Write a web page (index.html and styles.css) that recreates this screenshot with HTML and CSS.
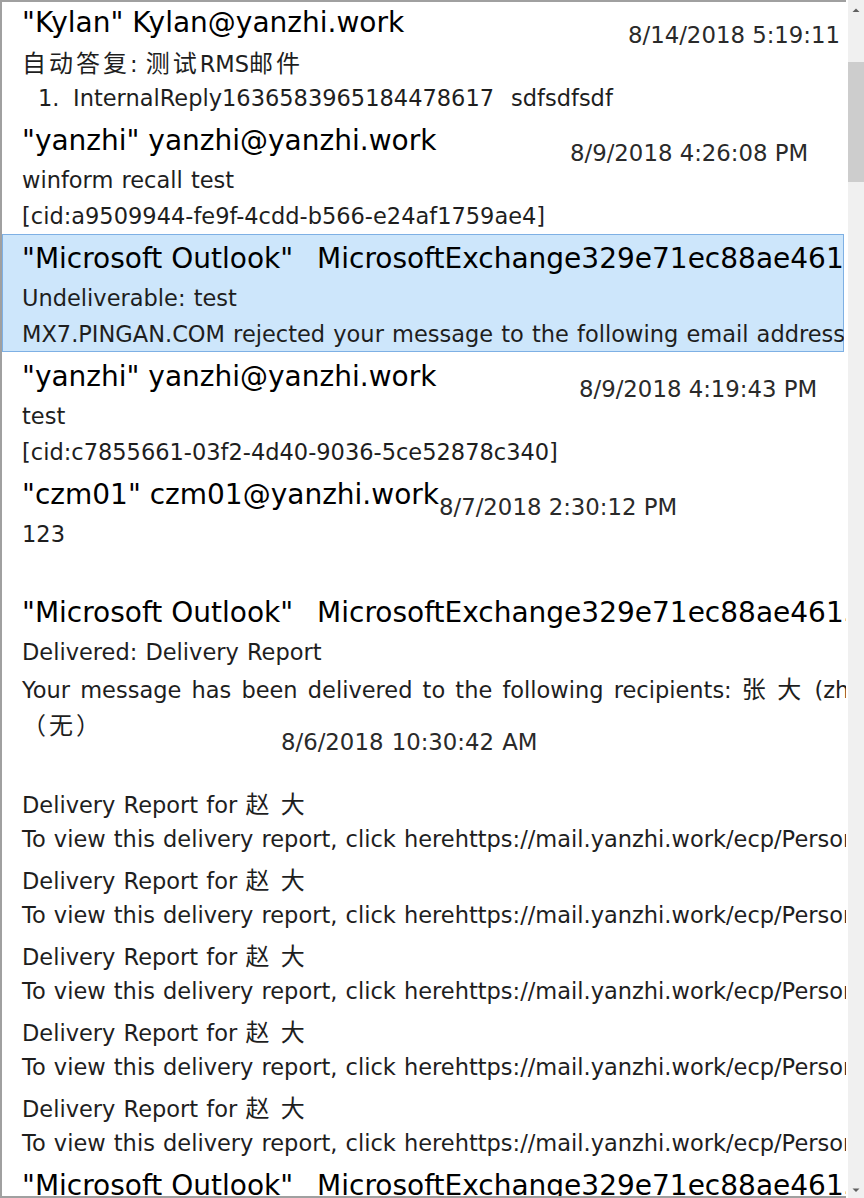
FILE: index.html
```html
<!DOCTYPE html>
<html>
<head>
<meta charset="utf-8">
<link rel="stylesheet" href="styles.css">
</head>
<body>
<div class="frame">
  <div class="list">
    <div class="inner">
      <div class="item">
        <div class="head"><span class="name w1">"Kylan" Kylan@yanzhi.work</span><span class="date">8/14/2018 5:19:11</span></div>
        <div class="line"><span class="cj">自动答复</span>: <span class="cj">测试</span>RMS<span class="cj">邮件</span></div>
        <div class="line"><span class="num">1.</span><span>InternalReply1636583965184478617</span><span class="after">sdfsdfsdf</span></div>
      </div>
      <div class="item">
        <div class="head"><span class="name w2">"yanzhi" yanzhi@yanzhi.work</span><span class="date">8/9/2018 4:26:08 PM</span></div>
        <div class="line">winform recall test</div>
        <div class="line">[cid:a9509944-fe9f-4cdd-b566-e24af1759ae4]</div>
      </div>
      <div class="item sel">
        <div class="head"><span class="name">"Microsoft Outlook"<span class="addr">MicrosoftExchange329e71ec88ae4615bbc36ab6ce41109e</span></span></div>
        <div class="line">Undeliverable: test</div>
        <div class="line">MX7.PINGAN.COM rejected your message to the following email addresses:</div>
      </div>
      <div class="item">
        <div class="head"><span class="name w4">"yanzhi" yanzhi@yanzhi.work</span><span class="date">8/9/2018 4:19:43 PM</span></div>
        <div class="line">test</div>
        <div class="line">[cid:c7855661-03f2-4d40-9036-5ce52878c340]</div>
      </div>
      <div class="item">
        <div class="head"><span class="name w5">"czm01" czm01@yanzhi.work</span><span class="date">8/7/2018 2:30:12 PM</span></div>
        <div class="line">123</div>
        <div class="line"></div>
      </div>
      <div class="item long">
        <div class="head"><span class="name">"Microsoft Outlook"<span class="addr">MicrosoftExchange329e71ec88ae4615bbc36ab6ce41109e</span></span></div>
        <div class="line">Delivered: Delivery Report</div>
        <div class="line wide">Your message has been delivered to the following recipients: <span class="cj">张 大</span> (zhangda@yanzhi.work)</div>
        <div class="line"><span class="cj">（无）</span></div>
        <div class="line d6"><span class="date6">8/6/2018 10:30:42 AM</span></div>
        <div class="pairs">
          <div class="pair">
            <div class="line">Delivery Report for <span class="cj">赵 大</span></div>
            <div class="line">To view this delivery report, click herehttps://mail.yanzhi.work/ecp/PersonalSettings/DeliveryReport.aspx</div>
          </div>
          <div class="pair">
            <div class="line">Delivery Report for <span class="cj">赵 大</span></div>
            <div class="line">To view this delivery report, click herehttps://mail.yanzhi.work/ecp/PersonalSettings/DeliveryReport.aspx</div>
          </div>
          <div class="pair">
            <div class="line">Delivery Report for <span class="cj">赵 大</span></div>
            <div class="line">To view this delivery report, click herehttps://mail.yanzhi.work/ecp/PersonalSettings/DeliveryReport.aspx</div>
          </div>
          <div class="pair">
            <div class="line">Delivery Report for <span class="cj">赵 大</span></div>
            <div class="line">To view this delivery report, click herehttps://mail.yanzhi.work/ecp/PersonalSettings/DeliveryReport.aspx</div>
          </div>
          <div class="pair">
            <div class="line">Delivery Report for <span class="cj">赵 大</span></div>
            <div class="line">To view this delivery report, click herehttps://mail.yanzhi.work/ecp/PersonalSettings/DeliveryReport.aspx</div>
          </div>
        </div>
      </div>
      <div class="item">
        <div class="head"><span class="name">"Microsoft Outlook"<span class="addr">MicrosoftExchange329e71ec88ae4615bbc36ab6ce41109e</span></span></div>
        <div class="line">Undeliverable: test</div>
        <div class="line">Delivery has failed to these recipients or groups:</div>
      </div>
    </div>
  </div>
  <div class="gap"></div>
  <div class="sb">
    <div class="sb-btn"><svg width="16" height="17" viewBox="0 0 16 17"><polygon points="4.5,12 8,8.5 11.5,12" fill="#606060"/></svg></div>
    <div class="sb-track"><div class="sb-thumb"></div></div>
    <div class="sb-btn"><svg width="16" height="17" viewBox="0 0 16 17"><polygon points="4.5,7.5 11.5,7.5 8,11" fill="#606060"/></svg></div>
  </div>
</div>
</body>
</html>
```
FILE: styles.css
```css
* { box-sizing: border-box; }
html, body { margin: 0; padding: 0; background: #ffffff; }
body {
  width: 864px;
  height: 1198px;
  overflow: hidden;
  font-family: "DejaVu Sans", sans-serif;
}
.frame {
  display: flex;
  height: 1198px;
  border-left: 2px solid #a0a0a0;
}
.list {
  width: 844px;
  flex: none;
  border-top: 2px solid #a0a0a0;
  border-bottom: 2px solid #a0a0a0;
  overflow: hidden;
}
.inner { margin-top: -4px; }
.gap { width: 2px; flex: none; }
.sb {
  width: 16px;
  flex: none;
  background: #f0f0f0;
  display: flex;
  flex-direction: column;
}
.sb-btn { height: 17px; flex: none; }
.sb-btn svg { display: block; }
.sb-track { flex: 1; }
.sb-thumb { margin-top: 45px; height: 120px; background: #cdcdcd; }

.item {
  height: 118px;
  padding-top: 4px;
  overflow: hidden;
  color: #1e1e1e;
  font-size: 22.5px;
}
.item.long { height: 573px; }
.item.sel {
  background: #cde6fb;
  box-shadow: inset 0 0 0 1px #7eb0e4;
  margin-right: 2px;
}
.head { display: flex; height: 42px; align-items: flex-start; }
.name {
  font-size: 28px;
  line-height: 42px;
  color: #000000;
  white-space: nowrap;
  padding-left: 20px;
  flex: none;
}
.addr { margin-left: 24px; }
.w1 { width: 626px; }
.w2 { width: 568px; }
.w4 { width: 577px; }
.w5 { width: 437px; }
.date {
  line-height: 36px;
  margin-top: 15px;
  white-space: nowrap;
  color: #2a2a2a;
  flex: none;
  font-size: 22.8px;
}
.line {
  height: 36px;
  line-height: 36px;
  padding-left: 20px;
  white-space: nowrap;
  word-spacing: 1px;
}
.line.wide { word-spacing: 3px; }
.cj {
  font-family: "Noto Sans CJK SC", sans-serif;
  font-size: 24px;
  letter-spacing: 3px;
  word-spacing: 0;
}
.num { display: inline-block; margin-left: 16px; width: 35px; }
.after { margin-left: 17px; }
.d6 { margin-top: -18px; }
.date6 { margin-left: 259px; color: #2a2a2a; font-size: 22.8px; }
.pairs { display: flex; flex-direction: column; gap: 4px; margin-top: 25px; }
```
